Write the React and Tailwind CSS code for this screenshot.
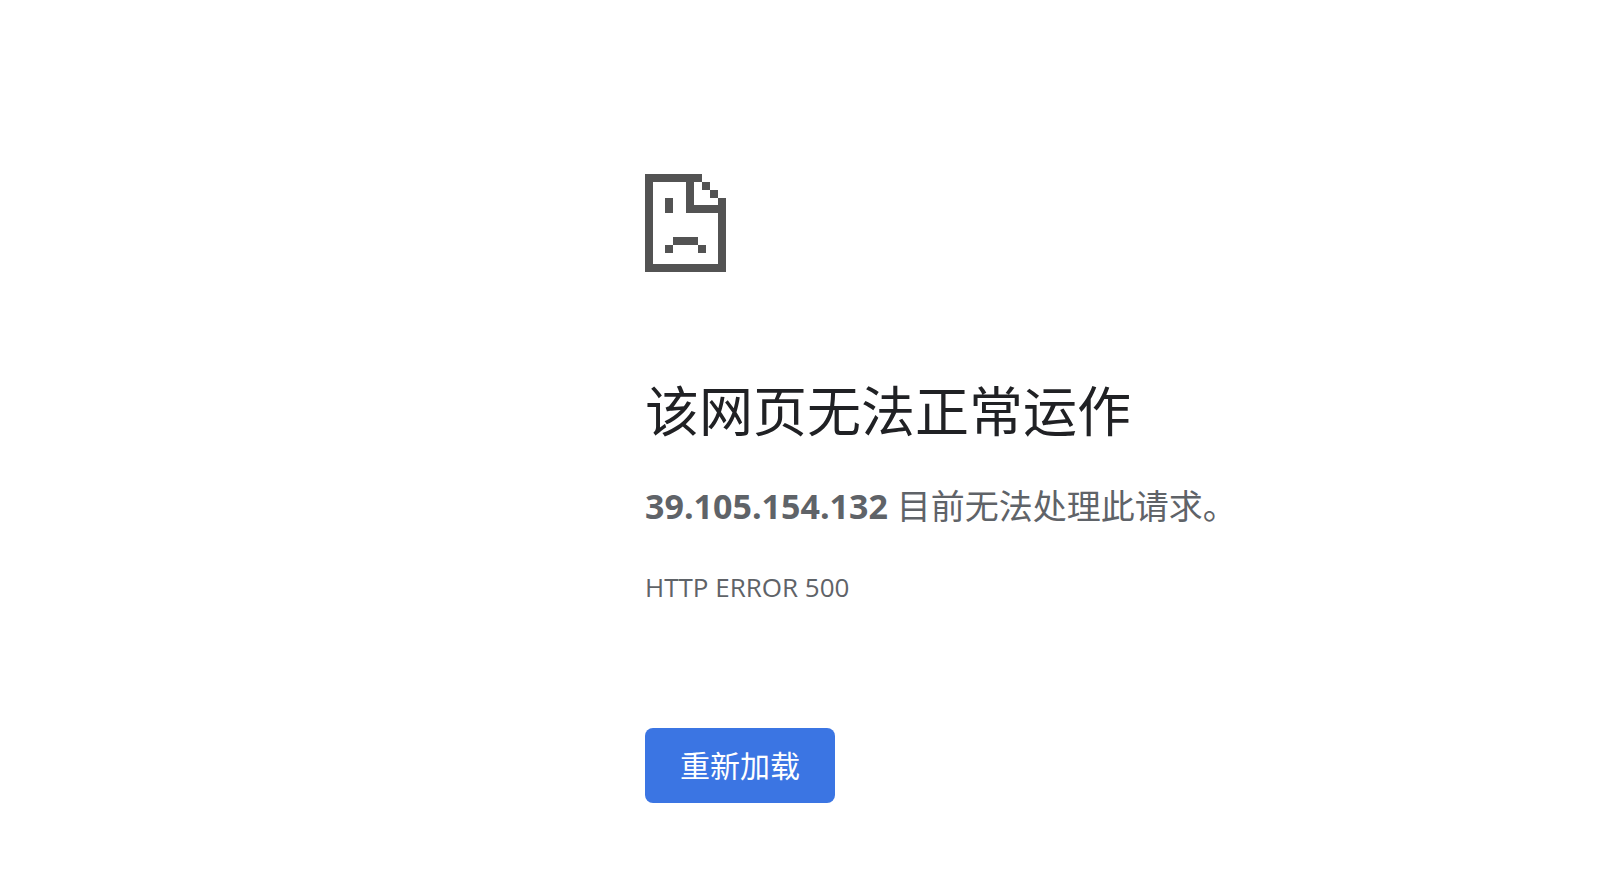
import React from "react";

// The sad page, on a grid of 8px blocks
const SadPageIcon = () => (
  <svg
    className="block w-[81px] h-[98px]"
    viewBox="0 0 81 98"
    fill="#535353"
    aria-hidden="true"
  >
    <path
      fillRule="evenodd"
      d="M0 0H57V8H49V31H73V24H81V98H0ZM8 8V90H73V39H41V8Z"
    />
    <path d="M57 8H65V16H57ZM65 16H73V24H65Z" />
    <path d="M20 24H28V39H20Z" />
    <path d="M28 63H53V71H28ZM20 71H28V79H20ZM53 71H61V79H53Z" />
  </svg>
);

class App extends React.Component {
  reload = () => {
    window.location.reload();
  };

  render() {
    return (
      <main className="min-h-screen bg-white pl-[645px] pt-[174px] pb-16 font-['Open_Sans','Noto_Sans_CJK_SC',sans-serif] text-[#5f6368]">
        <SadPageIcon />
        <h1 className="mt-[103px] text-[54px] leading-[72px] text-[#202124]">
          该网页无法正常运作
        </h1>
        <p className="mt-8 text-[34px] leading-[54px]">
          <strong className="font-bold">39.105.154.132</strong>{" "}
          目前无法处理此请求。
        </p>
        <p className="mt-8 text-[26px] leading-[44px]">HTTP ERROR 500</p>
        <button
          type="button"
          className="mt-[119px] h-[75px] w-[190px] rounded-lg bg-[#3b75e3] text-[30px] text-white"
          onClick={this.reload}
        >
          重新加载
        </button>
      </main>
    );
  }
}

export default App;
